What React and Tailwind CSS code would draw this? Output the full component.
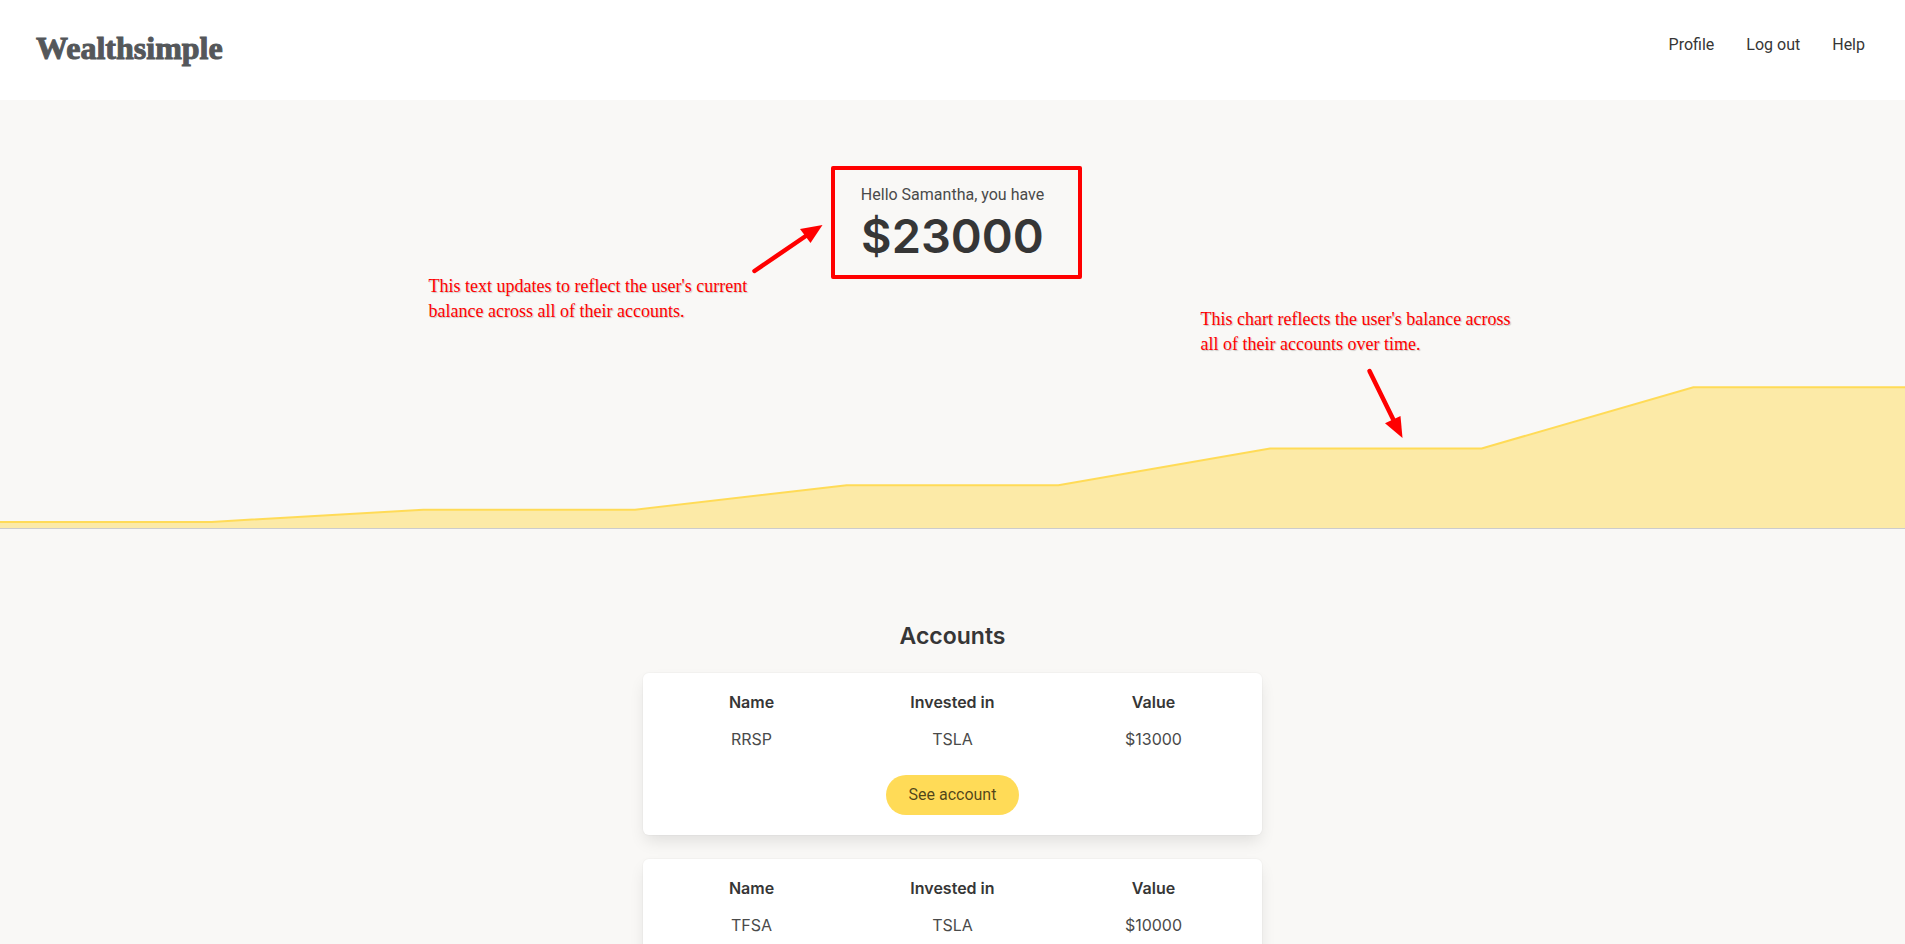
const navLinks = ['Profile', 'Log out', 'Help'];

const accounts = [
  { name: 'RRSP', investedIn: 'TSLA', value: 13000 },
  { name: 'TFSA', investedIn: 'TSLA', value: 10000 },
];

const history = [1000, 1000, 3000, 3000, 7000, 7000, 13000, 13000, 23000, 23000];

function Header() {
  return (
    <header className="flex h-[100px] items-start justify-between bg-white px-9">
      <a
        href="#home"
        className="mt-7 font-['Liberation_Serif',serif] text-[32px] leading-10 font-bold text-[#54575a] [-webkit-text-stroke:1px_#54575a]"
      >
        Wealthsimple
      </a>
      <nav className="mt-8 mr-1 flex gap-8">
        {navLinks.map((label) => (
          <a key={label} href="#nav" className="font-[Roboto,sans-serif] text-base leading-[26px] text-[#363636]">
            {label}
          </a>
        ))}
      </nav>
    </header>
  );
}

function BalanceChart() {
  const width = 1905;
  const height = 150;
  const points = history
    .map((v, i) => `${(i * width) / (history.length - 1)},${height - 1 - (v * 6.12) / 1000}`)
    .join(' ');
  return (
    <svg
      className="block h-[150px] w-full border-b border-[#cccccc]"
      viewBox={`0 0 ${width} ${height - 1}`}
      preserveAspectRatio="none"
      role="img"
      aria-label="Balance over time"
    >
      <polygon points={`0,${height - 1} ${points} ${width},${height - 1}`} fill="#ffdb57" fillOpacity="0.5" />
      <polyline points={points} fill="none" stroke="#ffdb57" strokeWidth="2" />
    </svg>
  );
}

function Notes() {
  return (
    <div className="pointer-events-none absolute top-0 left-1/2 h-full w-[1062px] -translate-x-1/2 font-['Liberation_Serif',serif] text-lg leading-[25px] text-[#ff0000] [text-shadow:1px_1px_1px_rgba(0,0,0,0.2)]">
      <div className="absolute top-[66px] left-[409px] h-[113px] w-[251px] rounded-xs border-4 border-[#ff0000]" />
      <p className="absolute top-[174px] left-[7px] whitespace-nowrap">
        This text updates to reflect the user's current
        <br />
        balance across all of their accounts.
      </p>
      <svg className="absolute top-[120px] left-[326px]" width="78" height="58" viewBox="748 220 78 58" aria-hidden="true">
        <path d="M754.5 271L808 234.5" stroke="#ff0000" strokeWidth="4.5" strokeLinecap="round" />
        <path d="M822.5 225L800 229L810.5 243Z" fill="#ff0000" />
      </svg>
      <p className="absolute top-[207px] left-[779px] whitespace-nowrap">
        This chart reflects the user's balance across
        <br />
        all of their accounts over time.
      </p>
      <svg className="absolute top-[265px] left-[942px]" width="44" height="78" viewBox="1364 365 44 78" aria-hidden="true">
        <path d="M1369.5 371L1394 421" stroke="#ff0000" strokeWidth="4.5" strokeLinecap="round" />
        <path d="M1402.5 438L1385 423.3L1400.5 416Z" fill="#ff0000" />
      </svg>
    </div>
  );
}

function Balance() {
  return (
    <section className="relative">
      <div className="pt-[82px] pb-[115px] text-center">
        <p className="font-[Roboto,sans-serif] text-base leading-[26px]">Hello Samantha, you have</p>
        <p className="text-[47px] leading-[56px] font-semibold text-[#363636]">$23000</p>
      </div>
      <BalanceChart />
      <Notes />
    </section>
  );
}

function AccountCard({ account }) {
  return (
    <article className="rounded-md bg-white p-5 shadow-[0_8px_16px_-2px_rgba(10,10,10,0.1),0_0_0_1px_rgba(10,10,10,0.02)]">
      <div className="-mx-3">
        <table className="w-full table-fixed text-center">
          <thead>
            <tr className="text-[#363636]">
              <th className="pb-3 leading-[18px] font-semibold">Name</th>
              <th className="pb-3 leading-[18px] font-semibold">Invested in</th>
              <th className="pb-3 leading-[18px] font-semibold">Value</th>
            </tr>
          </thead>
          <tbody>
            <tr>
              <td className="py-1">{account.name}</td>
              <td className="py-1">{account.investedIn}</td>
              <td className="py-1">${account.value}</td>
            </tr>
          </tbody>
        </table>
      </div>
      <div className="mt-5 flex justify-center">
        <button
          type="button"
          className="h-10 rounded-full bg-[#ffdb57] px-[23px] font-[Roboto,sans-serif] text-base text-black/70"
        >
          See account
        </button>
      </div>
    </article>
  );
}

function Accounts() {
  return (
    <section className="pt-[92px]">
      <h2 className="text-center text-[23px] leading-[30px] font-semibold text-[#363636]">Accounts</h2>
      <div className="-mx-3">
        <div className="mx-auto flex w-1/3 flex-col gap-6 px-3 pt-[22px] pb-12">
          {accounts.map((account) => (
            <AccountCard key={account.name} account={account} />
          ))}
        </div>
      </div>
    </section>
  );
}

export default function App() {
  return (
    <div className="h-screen overflow-x-hidden overflow-y-auto bg-[#f9f8f6] font-[Inter,sans-serif] text-base text-[#4a4a4a] [scrollbar-width:none]">
      <Header />
      <main>
        <Balance />
        <Accounts />
      </main>
    </div>
  );
}
